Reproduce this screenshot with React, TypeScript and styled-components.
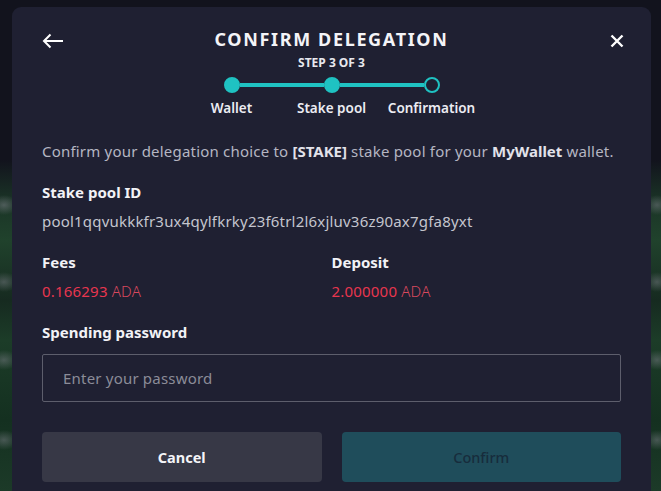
import React from 'react';
import styled, { createGlobalStyle } from 'styled-components';

const GlobalStyle = createGlobalStyle`
  html, body {
    margin: 0;
    padding: 0;
    height: 100%;
    background: #12131d;
  }
  #root {
    height: 100%;
  }
  * {
    box-sizing: border-box;
  }
`;

const Backdrop = styled.div`
  height: 491px;
  overflow: hidden;
  padding: 7px 10px 0 12px;
  font-family: 'Noto Sans', 'Open Sans', sans-serif;
  background:
    radial-gradient(ellipse 14px 10px at 4px 205px, rgba(120, 124, 132, 0.55), transparent),
    radial-gradient(ellipse 14px 10px at 4px 282px, rgba(120, 124, 132, 0.5), transparent),
    radial-gradient(ellipse 14px 10px at 4px 360px, rgba(120, 124, 132, 0.5), transparent),
    radial-gradient(ellipse 14px 10px at 4px 440px, rgba(120, 124, 132, 0.5), transparent),
    radial-gradient(ellipse 12px 10px at 657px 205px, rgba(120, 124, 132, 0.5), transparent),
    radial-gradient(ellipse 12px 10px at 657px 282px, rgba(120, 124, 132, 0.5), transparent),
    radial-gradient(ellipse 12px 10px at 657px 360px, rgba(120, 124, 132, 0.5), transparent),
    radial-gradient(ellipse 12px 10px at 657px 440px, rgba(120, 124, 132, 0.5), transparent),
    linear-gradient(
      180deg,
      #12131d 0px,
      #12131d 160px,
      #1a3326 200px,
      #20422c 240px,
      #162a20 300px,
      #1c3c28 340px,
      #143020 420px,
      #1c3a28 491px
    );
`;

const Modal = styled.div`
  width: 639px;
  height: 500px;
  background: #1f2032;
  border-radius: 9px 9px 0 0;
  padding: 20px 30px 0 30px;
  display: flex;
  flex-direction: column;
`;

const Header = styled.div`
  display: grid;
  grid-template-columns: 40px 1fr 40px;
  align-items: start;
`;

const IconButton = styled.button<{ $align: 'start' | 'end' }>`
  background: none;
  border: none;
  padding: 0;
  margin-top: 7px;
  margin-right: ${({ $align }) => ($align === 'end' ? '-3px' : '0')};
  height: 14px;
  display: flex;
  align-items: center;
  justify-content: ${({ $align }) => ($align === 'start' ? 'flex-start' : 'flex-end')};
  color: #ffffff;
  cursor: pointer;
`;

const TitleBlock = styled.div`
  display: flex;
  flex-direction: column;
  align-items: center;
`;

const Title = styled.h1`
  margin: 0;
  font-size: 18px;
  line-height: 24px;
  font-weight: 700;
  letter-spacing: 1.65px;
  color: #f4f4f8;
`;

const StepCount = styled.div`
  margin-top: 4px;
  font-size: 12px;
  line-height: 15px;
  font-weight: 700;
  color: #e8e8ee;
`;

const Track = styled.div`
  margin-top: 7px;
  display: flex;
  align-items: center;
`;

const Dot = styled.span<{ $done: boolean }>`
  width: 16px;
  height: 16px;
  border-radius: 50%;
  background: ${({ $done }) => ($done ? '#1fc2c2' : 'transparent')};
  border: 2px solid #1fc2c2;
`;

const Bar = styled.span`
  width: 84px;
  height: 4px;
  background: #1fc2c2;
`;

const StepLabels = styled.div`
  margin-top: 6px;
  display: grid;
  grid-template-columns: repeat(3, 100px);
`;

const StepLabel = styled.span`
  text-align: center;
  font-size: 13.5px;
  line-height: 18px;
  font-weight: 600;
  color: #ececf2;
  white-space: nowrap;
`;

const Description = styled.p`
  margin: 23px 0 0 0;
  font-size: 15px;
  line-height: 22px;
  letter-spacing: 0.2px;
  color: #b5b6c2;

  b {
    font-weight: 700;
    letter-spacing: 0;
    color: #e2e2ea;
  }
`;

const Label = styled.div<{ $gap: number }>`
  margin-top: ${({ $gap }) => $gap}px;
  font-size: 15px;
  line-height: 22px;
  font-weight: 700;
  color: #f2f2f6;
`;

const Value = styled.div`
  margin-top: 7px;
  font-size: 15px;
  line-height: 22px;
  letter-spacing: 0.2px;
  color: #c4c5ce;
`;

const Columns = styled.div`
  display: grid;
  grid-template-columns: 1fr 1fr;
`;

const Amount = styled.div`
  margin-top: 7px;
  font-size: 15px;
  line-height: 22px;
  letter-spacing: 0.2px;
  color: #e8364f;

  span {
    font-weight: 300;
    color: #d8485e;
  }
`;

const PasswordInput = styled.input`
  margin-top: 11px;
  width: 100%;
  height: 48px;
  background: transparent;
  border: 1px solid #5d5e6c;
  border-radius: 2px;
  padding: 0 20px;
  font-family: 'Noto Sans', 'Open Sans', sans-serif;
  font-size: 15px;
  letter-spacing: 0.2px;
  color: #ffffff;
  outline: none;

  &::placeholder {
    color: #8b8c98;
  }
`;

const Actions = styled.div`
  margin-top: 30px;
  display: grid;
  grid-template-columns: 1fr 1fr;
  column-gap: 20px;
`;

const Button = styled.button<{ $variant: 'secondary' | 'primary' }>`
  height: 50px;
  border: none;
  border-radius: 4px;
  font-family: 'Noto Sans', 'Open Sans', sans-serif;
  font-size: 14.5px;
  font-weight: ${({ $variant }) => ($variant === 'secondary' ? 700 : 500)};
  background: ${({ $variant }) => ($variant === 'secondary' ? '#373846' : '#1f4d5b')};
  color: ${({ $variant }) => ($variant === 'secondary' ? '#f4f4f8' : '#172c3c')};
  cursor: pointer;
`;

const steps = ['Wallet', 'Stake pool', 'Confirmation'];

const BackArrow = () => (
  <svg width="22" height="16" viewBox="0 0 22 16" fill="none" stroke="currentColor" strokeWidth="2">
    <path d="M21 8H2.5" />
    <path d="M8.5 1.5L2 8l6.5 6.5" />
  </svg>
);

const CloseIcon = () => (
  <svg width="14" height="14" viewBox="0 0 14 14" fill="none" stroke="currentColor" strokeWidth="2.4">
    <path d="M1.5 1.5l11 11M12.5 1.5l-11 11" />
  </svg>
);

export default function App() {
  return (
    <>
      <GlobalStyle />
      <Backdrop>
        <Modal>
          <Header>
            <IconButton $align="start" aria-label="Back">
              <BackArrow />
            </IconButton>
            <TitleBlock>
              <Title>CONFIRM DELEGATION</Title>
              <StepCount>STEP 3 OF 3</StepCount>
              <Track>
                <Dot $done />
                <Bar />
                <Dot $done />
                <Bar />
                <Dot $done={false} />
              </Track>
              <StepLabels>
                {steps.map((step) => (
                  <StepLabel key={step}>{step}</StepLabel>
                ))}
              </StepLabels>
            </TitleBlock>
            <IconButton $align="end" aria-label="Close">
              <CloseIcon />
            </IconButton>
          </Header>

          <Description>
            Confirm your delegation choice to <b>[STAKE]</b> stake pool for your <b>MyWallet</b> wallet.
          </Description>

          <Label $gap={19}>Stake pool ID</Label>
          <Value>pool1qqvukkkfr3ux4qylfkrky23f6trl2l6xjluv36z90ax7gfa8yxt</Value>

          <Columns>
            <div>
              <Label $gap={19}>Fees</Label>
              <Amount>
                0.166293 <span>ADA</span>
              </Amount>
            </div>
            <div>
              <Label $gap={19}>Deposit</Label>
              <Amount>
                2.000000 <span>ADA</span>
              </Amount>
            </div>
          </Columns>

          <Label $gap={19}>Spending password</Label>
          <PasswordInput type="password" placeholder="Enter your password" />

          <Actions>
            <Button $variant="secondary">Cancel</Button>
            <Button $variant="primary">Confirm</Button>
          </Actions>
        </Modal>
      </Backdrop>
    </>
  );
}
